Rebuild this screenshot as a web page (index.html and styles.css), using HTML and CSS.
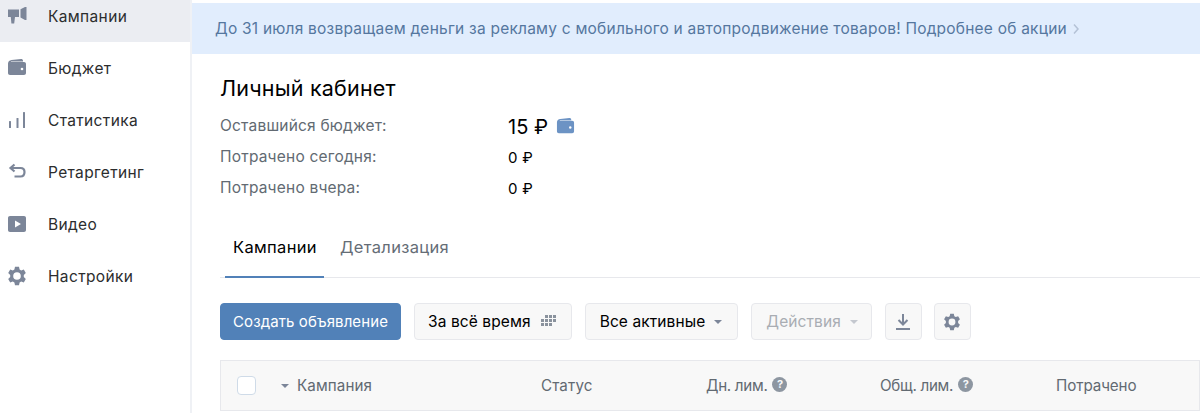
FILE: index.html
```html
<!DOCTYPE html>
<html lang="ru">
<head>
    <meta charset="UTF-8">
    <title>Личный кабинет</title>
    <link rel="stylesheet" href="styles.css">
</head>
<body>
    <nav class="sidebar">
        <a class="nav-item active">
            <svg class="nav-icon" viewBox="0 0 20 20"><path d="M1 3.500h11v7.500H8L7.200 17.500H4.400L3.800 11H1z"/><path d="M13.500 3.300 18 1h1.500v13H18l-4.500-2.400z"/></svg>
            <span>Кампании</span>
        </a>
        <a class="nav-item">
            <svg class="nav-icon" viewBox="0 0 20 20"><path d="M1 5.500C1 3.500 2.500 2.300 4.500 2L14 1c1.200 0 2 .6 2 1.500V3.500H4v.5h13c1.200 0 2 .8 2 2v9c0 1.200-.8 2-2 2H3c-1.200 0-2-.8-2-2z"/><circle cx="15" cy="11" r="1.300" fill="#fff"/></svg>
            <span>Бюджет</span>
        </a>
        <a class="nav-item">
            <svg class="nav-icon" viewBox="0 0 20 20"><rect x="2" y="11" width="2" height="7" rx=".5"/><rect x="9.500" y="8" width="2" height="10" rx=".5"/><rect x="16" y="2" width="2" height="16" rx=".5"/></svg>
            <span>Статистика</span>
        </a>
        <a class="nav-item">
            <svg class="nav-icon" viewBox="0 0 20 20"><path d="M7.500 2.500 3.500 6l4 3.500M4 6h9.500c2.500 0 4 1.500 4 4s-1.500 4.500-4 4.500H7.500" fill="none" stroke="#7c8699" stroke-width="2.200"/></svg>
            <span>Ретаргетинг</span>
        </a>
        <a class="nav-item">
            <svg class="nav-icon" viewBox="0 0 20 20"><path fill-rule="evenodd" d="M3 2h14c1.200 0 2 .8 2 2v12c0 1.200-.8 2-2 2H3c-1.200 0-2-.8-2-2V4c0-1.200.8-2 2-2zm5 4.500v7l6-3.500z"/></svg>
            <span>Видео</span>
        </a>
        <a class="nav-item">
            <svg class="nav-icon" viewBox="0 0 20 20"><use href="#gear"/></svg>
            <span>Настройки</span>
        </a>
    </nav>

    <main class="content">
        <div class="banner">
            До 31 июля возвращаем деньги за рекламу с мобильного и автопродвижение товаров! Подробнее об акции
            <svg class="banner-arrow" viewBox="0 0 8 12"><path d="M2 1.500 6 6l-4 4.500" fill="none" stroke="#b4c2d6" stroke-width="1.500"/></svg>
        </div>

        <div class="cabinet">
            <h1>Личный кабинет</h1>
            <div class="stat-row big">
                <span class="stat-label">Оставшийся бюджет:</span>
                <span class="stat-value">15 ₽</span>
                <svg class="wallet" viewBox="0 0 20 20"><path d="M1 5.500C1 3.500 2.500 2.300 4.500 2L14 1c1.200 0 2 .6 2 1.500V3.500H4v.5h13c1.200 0 2 .8 2 2v9c0 1.200-.8 2-2 2H3c-1.200 0-2-.8-2-2z"/><circle cx="15" cy="11" r="1.300" fill="#fff"/></svg>
            </div>
            <div class="stat-row">
                <span class="stat-label">Потрачено сегодня:</span>
                <span class="stat-value">0 ₽</span>
            </div>
            <div class="stat-row">
                <span class="stat-label">Потрачено вчера:</span>
                <span class="stat-value">0 ₽</span>
            </div>

            <div class="tabs">
                <a class="tab active">Кампании</a>
                <a class="tab">Детализация</a>
            </div>

            <div class="toolbar">
                <button class="btn primary">Создать объявление</button>
                <button class="btn period">За всё время
                    <svg class="dots" viewBox="0 0 18 14"><rect x="5" y="0" width="3" height="3"/><rect x="9" y="0" width="3" height="3"/><rect x="13" y="0" width="3" height="3"/><rect x="1" y="4" width="3" height="3"/><rect x="5" y="4" width="3" height="3"/><rect x="9" y="4" width="3" height="3"/><rect x="13" y="4" width="3" height="3"/><rect x="1" y="8" width="3" height="3"/><rect x="5" y="8" width="3" height="3"/><rect x="9" y="8" width="3" height="3"/></svg>
                </button>
                <button class="btn select">Все активные <i class="caret"></i></button>
                <button class="btn select disabled">Действия <i class="caret"></i></button>
                <button class="btn icon-btn">
                    <svg class="tool-icon" viewBox="0 0 16 18"><path d="M8 1v10M3.500 7 8 11.500 12.500 7" fill="none" stroke="#7c8699" stroke-width="2"/><rect x="1" y="15" width="14" height="2"/></svg>
                </button>
                <button class="btn icon-btn last">
                    <svg class="tool-icon" viewBox="0 0 20 20"><use href="#gear"/></svg>
                </button>
            </div>

            <div class="table-head">
                <span class="check"></span>
                <span class="col col-name"><i class="caret"></i>Кампания</span>
                <span class="col col-status">Статус</span>
                <span class="col col-day">Дн. лим. <b class="hint">?</b></span>
                <span class="col col-total">Общ. лим. <b class="hint">?</b></span>
                <span class="col col-spent">Потрачено</span>
            </div>
        </div>
    </main>

    <svg class="defs" width="0" height="0">
        <defs>
            <path id="gear" fill-rule="evenodd" d="M8 .8h4l.6 2.700 1.600.9 2.600-.8 2 3.400-2 1.900v2.200l2 1.900-2 3.400-2.600-.8-1.600.9-.6 2.700H8l-.6-2.700-1.600-.9-2.600.8-2-3.400 2-1.900V8.900l-2-1.900 2-3.400 2.600.8 1.600-.9zM10 6.200a3.800 3.800 0 1 0 0 7.600 3.800 3.800 0 0 0 0-7.600z"/>
        </defs>
    </svg>
</body>
</html>
```

FILE: styles.css
```css
* {
    margin: 0;
    padding: 0;
    box-sizing: border-box;
}

html, body {
    height: 100%;
    overflow: hidden;
}

body {
    display: flex;
    font-family: Inter, "Noto Sans", sans-serif;
    background: #fff;
    color: #000;
}

.defs {
    position: absolute;
}

/* left menu */
.sidebar {
    width: 192px;
    flex-shrink: 0;
    border-right: 2px solid #eff1f5;
    margin-top: -10px;
}

.nav-item {
    display: flex;
    align-items: center;
    height: 52px;
    padding-left: 7px;
    font-size: 15.5px;
    letter-spacing: .35px;
    color: #2c2d2e;
}

.nav-item.active {
    background: #ebedf2;
}

.nav-icon {
    width: 20px;
    height: 20px;
    margin-right: 21px;
    fill: #7c8699;
}

/* main part */
.content {
    flex: 1;
    min-width: 0;
    padding-top: 3px;
}

.banner {
    display: flex;
    align-items: center;
    height: 51px;
    padding-left: 23px;
    background: #e1edfd;
    color: #55779f;
    font-size: 15.5px;
    letter-spacing: .22px;
    white-space: nowrap;
}

.banner-arrow {
    width: 8px;
    height: 12px;
    margin-left: 5px;
}

.cabinet {
    padding-left: 28px;
}

h1 {
    font-size: 21.5px;
    font-weight: 400;
    letter-spacing: .2px;
    line-height: 24px;
    margin-top: 22px;
    margin-bottom: 10px;
}

.stat-row {
    display: flex;
    align-items: center;
    height: 31px;
    font-size: 15.5px;
    letter-spacing: .2px;
}

.stat-label {
    width: 288px;
    color: #626a72;
}

.stat-value {
    font-size: 15px;
    letter-spacing: .3px;
    margin-top: 1px;
}

.stat-row.big .stat-value {
    font-size: 20px;
    letter-spacing: 0;
    margin-top: 3px;
}

.wallet {
    width: 19px;
    height: 19px;
    margin: 1px 0 0 8px;
    fill: #6c93c4;
}

.tabs {
    display: flex;
    height: 61px;
    margin-top: 14px;
    border-bottom: 1px solid #e7e8ec;
    font-size: 16.5px;
    letter-spacing: .33px;
}

.tab {
    display: flex;
    align-items: center;
    height: 61px;
    padding: 0 8px;
    margin-left: 8px;
    color: #656d76;
    border-bottom: 2px solid transparent;
}

.tab.active {
    margin-left: 5px;
    padding-right: 7px;
    color: #000;
    border-bottom-color: #5181b8;
}

.toolbar {
    display: flex;
    gap: 13px;
    margin-top: 25px;
}

.btn {
    display: flex;
    align-items: center;
    height: 37px;
    padding: 0 13px;
    border: 1px solid #e7e8ec;
    border-radius: 4px;
    background: #f8f8f8;
    font-family: inherit;
    font-size: 15.5px;
    letter-spacing: .1px;
    color: #000;
}

.btn.primary {
    width: 181px;
    justify-content: center;
    padding: 0;
    background: #5181b8;
    border-color: #5181b8;
    color: #fff;
    font-size: 15px;
}

.btn.select {
    padding: 0 15px 0 14px;
}

.btn.select.disabled {
    padding-right: 13px;
    color: #a9adb3;
}

.icon-btn {
    width: 37px;
    padding: 0;
    justify-content: center;
}

.icon-btn.last {
    margin-left: -1px;
}

.tool-icon {
    width: 18px;
    height: 18px;
    fill: #7c8699;
}

.dots {
    width: 18px;
    height: 14px;
    margin-left: 9px;
    fill: #8a929d;
}

.caret {
    display: inline-block;
    width: 0;
    height: 0;
    margin-left: 9px;
    border-left: 4.500px solid transparent;
    border-right: 4.500px solid transparent;
    border-top: 4.500px solid #7c8699;
}

.btn.disabled .caret {
    border-top-color: #c4c8cf;
}

.table-head {
    display: flex;
    align-items: center;
    height: 51px;
    margin-top: 20px;
    background: #f8f8f8;
    border: 1px solid #e7e8ec;
    font-size: 15.2px;
    letter-spacing: .1px;
    color: #626a72;
}

.check {
    width: 19px;
    height: 19px;
    margin-left: 16px;
    border: 1.500px solid #cfdbe8;
    border-radius: 4px;
    background: #fff;
}

.col {
    display: flex;
    align-items: center;
    white-space: nowrap;
}

.col-name {
    width: 260px;
    margin-left: 25px;
}

.col-name .caret {
    margin: 0 8px 0 0;
}

.col-status {
    width: 165px;
}

.col-day {
    width: 174px;
    letter-spacing: -.3px;
}

.col-total {
    width: 176px;
    letter-spacing: -.3px;
}

.col-spent {
    letter-spacing: -.1px;
}

.hint {
    display: inline-flex;
    align-items: center;
    justify-content: center;
    width: 15px;
    height: 15px;
    margin: -3px 0 0 5px;
    border-radius: 50%;
    background: #8d96a1;
    color: #f7f8fa;
    font-size: 11px;
}
```
